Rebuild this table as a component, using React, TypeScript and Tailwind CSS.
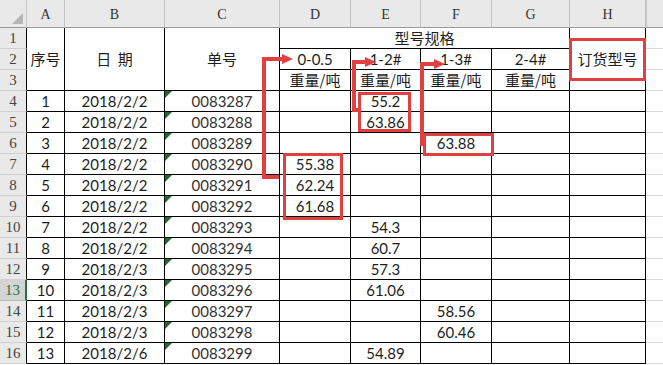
import React from "react";

type Row = { n: number; date: string; no: string; d?: string; e?: string; f?: string };

const rows: Row[] = [
  { n: 1, date: "2018/2/2", no: "0083287", e: "55.2" },
  { n: 2, date: "2018/2/2", no: "0083288", e: "63.86" },
  { n: 3, date: "2018/2/2", no: "0083289", f: "63.88" },
  { n: 4, date: "2018/2/2", no: "0083290", d: "55.38" },
  { n: 5, date: "2018/2/2", no: "0083291", d: "62.24" },
  { n: 6, date: "2018/2/2", no: "0083292", d: "61.68" },
  { n: 7, date: "2018/2/2", no: "0083293", e: "54.3" },
  { n: 8, date: "2018/2/2", no: "0083294", e: "60.7" },
  { n: 9, date: "2018/2/3", no: "0083295", e: "57.3" },
  { n: 10, date: "2018/2/3", no: "0083296", e: "61.06" },
  { n: 11, date: "2018/2/3", no: "0083297", f: "58.56" },
  { n: 12, date: "2018/2/3", no: "0083298", f: "60.46" },
  { n: 13, date: "2018/2/6", no: "0083299", e: "54.89" },
];

const cols = ["A", "B", "C", "D", "E", "F", "G", "H"];

const cell = "flex items-center justify-center border-r border-b border-black text-[15px] text-[#1e1e1e]";
const cjk = "font-['Noto_Sans_CJK_SC',sans-serif]";
const num = "font-['Lato','Noto_Sans_CJK_SC',sans-serif]";
const rowHead =
  "flex items-center justify-center border-b border-b-[#d0d0d0] border-r border-r-black bg-[#e9e9e9] text-[15px] text-[#444] font-['Liberation_Serif',serif]";
const extra = "border-b border-[#dadada]";

const Arrow = ({ className }: { className: string }) => (
  <svg className={`absolute ${className}`} viewBox="0 0 11 10">
    <polygon points="0,0 11,5 0,10" fill="#e0403f" />
  </svg>
);

export default function App() {
  return (
    <div className="relative h-[365px] w-[663px] overflow-hidden bg-white">
      <div className="grid grid-cols-[27px_38px_100px_115px_71px_70px_71px_78px_76px_1fr] grid-rows-[28px_repeat(16,21px)]">
        {/* column headers */}
        <div className="relative border-r border-b border-r-[#c4c4c4] border-b-[#9a9a9a] bg-[#e9e9e9]">
          <svg className="absolute right-[3px] bottom-[3px] h-[11px] w-[11px]" viewBox="0 0 11 11">
            <polygon points="11,0 11,11 0,11" fill="#b5b5b5" />
          </svg>
        </div>
        {cols.map((c) => (
          <div
            key={c}
            className="flex items-center justify-center border-r border-b border-r-[#c4c4c4] border-b-[#9a9a9a] bg-[#e9e9e9] pt-[2px] text-[14px] text-[#333] font-['Liberation_Serif',serif]"
          >
            {c}
          </div>
        ))}
        <div className="border-b border-l border-l-[#c4c4c4] border-b-[#9a9a9a] bg-[#e9e9e9]" />

        {/* rows 1-3, merged header */}
        <div className={`${rowHead} col-start-1 row-start-2`}>1</div>
        <div className={`${rowHead} col-start-1 row-start-3`}>2</div>
        <div className={`${rowHead} col-start-1 row-start-4`}>3</div>
        <div className={`${cell} ${cjk} col-start-2 row-start-2 row-span-3`}>序号</div>
        <div className={`${cell} ${cjk} col-start-3 row-start-2 row-span-3 whitespace-pre`}>日  期</div>
        <div className={`${cell} ${cjk} col-start-4 row-start-2 row-span-3`}>单号</div>
        <div className={`${cell} ${cjk} col-start-5 col-span-4 row-start-2`}>型号规格</div>
        <div className={`${cell} ${num} col-start-5 row-start-3`}>0-0.5</div>
        <div className={`${cell} ${num} col-start-6 row-start-3`}>1-2#</div>
        <div className={`${cell} ${num} col-start-7 row-start-3`}>1-3#</div>
        <div className={`${cell} ${num} col-start-8 row-start-3`}>2-4#</div>
        <div className={`${cell} ${cjk} col-start-5 row-start-4`}>重量/吨</div>
        <div className={`${cell} ${cjk} col-start-6 row-start-4`}>重量/吨</div>
        <div className={`${cell} ${cjk} col-start-7 row-start-4`}>重量/吨</div>
        <div className={`${cell} ${cjk} col-start-8 row-start-4`}>重量/吨</div>
        <div className={`${cell} ${cjk} col-start-9 row-start-2 row-span-3`}>订货型号</div>
        <div className={`${extra} col-start-10 row-start-2`} />
        <div className={`${extra} col-start-10 row-start-3`} />
        <div className={`${extra} col-start-10 row-start-4`} />

        {/* data rows */}
        {rows.map((r, i) => {
          const line = i + 4;
          const selected = line === 13;
          return (
            <React.Fragment key={r.n}>
              <div
                className={
                  selected
                    ? "flex items-center justify-center border-b border-b-[#bcbcbc] border-r-2 border-r-[#217346] bg-[#d4d4d4] text-[15px] text-[#217346] font-['Liberation_Serif',serif]"
                    : rowHead
                }
              >
                {line}
              </div>
              <div className={`${cell} ${num}`}>{r.n}</div>
              <div className={`${cell} ${num}`}>{r.date}</div>
              <div className={`${cell} ${num} relative text-[#333]`}>
                <svg className="absolute top-0 left-0 h-[7px] w-[7px]" viewBox="0 0 7 7">
                  <polygon points="0,0 7,0 0,7" fill="#1f6b2e" />
                </svg>
                {r.no}
              </div>
              <div className={`${cell} ${num}`}>{r.d}</div>
              <div className={`${cell} ${num}`}>{r.e}</div>
              <div className={`${cell} ${num}`}>{r.f}</div>
              <div className={cell} />
              <div className={cell} />
              <div className={extra} />
            </React.Fragment>
          );
        })}
      </div>

      {/* red annotations */}
      <div className="pointer-events-none absolute inset-0">
        {/* 0-0.5 */}
        <div className="absolute top-[57px] left-[262px] h-[122px] w-[4px] bg-[#e0403f]" />
        <div className="absolute top-[57px] left-[262px] h-[4px] w-[22px] bg-[#e0403f]" />
        <Arrow className="top-[54px] left-[282px] h-[10px] w-[11px]" />
        <div className="absolute top-[175px] left-[262px] h-[4px] w-[17px] bg-[#e0403f]" />
        <div className="absolute top-[153px] left-[283px] h-[67px] w-[60px] border-[3px] border-[#e0403f]" />

        {/* 1-2# */}
        <div className="absolute top-[60px] left-[352px] h-[52px] w-[4px] bg-[#e0403f]" />
        <div className="absolute top-[60px] left-[352px] h-[4px] w-[16px] bg-[#e0403f]" />
        <Arrow className="top-[57px] left-[365px] h-[10px] w-[11px]" />
        <div className="absolute top-[108px] left-[352px] h-[4px] w-[8px] bg-[#e0403f]" />
        <div className="absolute top-[92px] left-[358px] h-[40px] w-[53px] border-[3px] border-[#e0403f]" />

        {/* 1-3# */}
        <div className="absolute top-[62px] left-[420px] h-[84px] w-[4px] bg-[#e0403f]" />
        <div className="absolute top-[62px] left-[420px] h-[4px] w-[16px] bg-[#e0403f]" />
        <Arrow className="top-[59px] left-[434px] h-[10px] w-[11px]" />
        <div className="absolute top-[133px] left-[423px] h-[23px] w-[71px] border-[3px] border-[#e0403f]" />

        {/* 订货型号 */}
        <div className="absolute top-[38px] left-[569px] h-[43px] w-[77px] border-[3px] border-[#e0403f]" />
      </div>
    </div>
  );
}
